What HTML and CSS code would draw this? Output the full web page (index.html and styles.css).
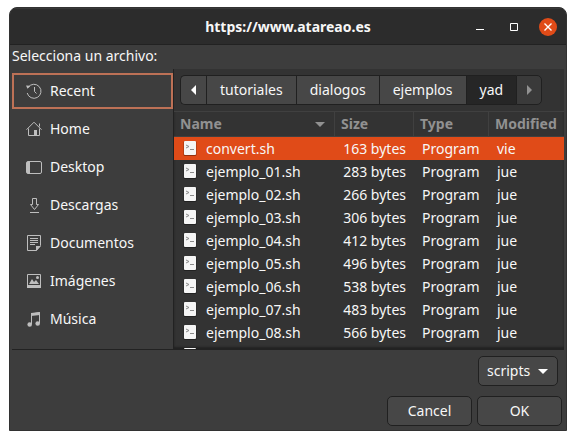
FILE: index.html
```html
<!DOCTYPE html>
<html lang="es">
<head>
<meta charset="utf-8">
<meta name="viewport" content="width=device-width, initial-scale=1">
<title>https://www.atareao.es</title>
<link rel="stylesheet" href="styles.css">
</head>
<body>
<svg class="defs" aria-hidden="true">
  <symbol id="script" viewBox="0 0 14 16">
    <rect x="0.5" y="1" width="13" height="15" rx="1.5" fill="#000" fill-opacity=".35"/>
    <rect x="1" y="1" width="12" height="14" rx="1" fill="#f5f5f5"/>
    <path d="M3 5l3 1.5L3 8M7 9.5h4" fill="none" stroke="#8a8a8a"/>
  </symbol>
</svg>
<main class="window">
  <header class="titlebar">
    <h1>https://www.atareao.es</h1>
    <div class="controls">
      <button type="button" aria-label="Minimizar"><svg width="18" height="18"><path d="M5 11.5h8" stroke="#fff"/></svg></button>
      <button type="button" aria-label="Maximizar"><svg width="18" height="18"><path d="M5.5 5.5h7v7h-7z" fill="none" stroke="#fff"/></svg></button>
      <button type="button" class="close" aria-label="Cerrar"><svg width="18" height="18"><path d="M5.5 5.5l7 7M12.5 5.5l-7 7" stroke="#fff" stroke-width="1.4"/></svg></button>
    </div>
  </header>
  <p class="prompt">Selecciona un archivo:</p>
  <div class="chooser">
    <nav class="places">
      <a href="#" class="current"><svg width="16" height="16"><path d="M2.3 4.2A7 7 0 1 1 1.2 10M8.500 4v4.500l2 2" /><path d="M0 2.500l4.500.3-3 3z" fill="#bebebe" stroke="none"/></svg>Recent</a>
      <a href="#"><svg width="16" height="16"><path d="M.5 8.700L8 1.200l7.500 7.500M2.500 7.500v7h11v-7M13.500 5.500v-3"/><path d="M8 9h3v6H8z" fill="#bebebe" stroke="none"/></svg>Home</a>
      <a href="#"><svg width="16" height="16"><rect x=".5" y="2.500" width="15" height="12" rx="1.500"/><path d="M1 3h3v11H1z" fill="#bebebe" stroke="none"/></svg>Desktop</a>
      <a href="#"><svg width="16" height="16"><path d="M6.500 1.500h4v6h2l-4 5-4-5h2zM4 15.500h9"/></svg>Descargas</a>
      <a href="#"><svg width="16" height="16"><path d="M1.500.5h13v10l-4 5h-9zM4 3.500h8M4 5.500h8M4 7.500h8M4 9.500h5"/><path d="M10 11h5l-5 5z" fill="#bebebe" stroke="none"/></svg>Documentos</a>
      <a href="#"><svg width="16" height="16"><path d="M1.500 1.500h13v13h-13z"/><path d="M1 12h14v3H1zM3 11l3-5 2 3 2-2 3 4z" fill="#bebebe" stroke="none"/><circle cx="11.500" cy="4.500" r="1.500" fill="#bebebe" stroke="none"/></svg>Imágenes</a>
      <a href="#"><svg width="16" height="16"><path d="M5.500 13V3l8-1.500V12" /><path d="M5 2l9-1v3L5 5z" fill="#bebebe" stroke="none"/><circle cx="3.700" cy="13.500" r="2.300" fill="#bebebe" stroke="none"/><circle cx="11.700" cy="12.500" r="2.300" fill="#bebebe" stroke="none"/></svg>Música</a>
    </nav>
    <section class="browser">
      <div class="path">
        <button type="button" class="arrow" aria-label="Anterior"><svg width="6" height="10"><path d="M5 0v10L0 5z" fill="#fff"/></svg></button>
        <button type="button">tutoriales</button>
        <button type="button">dialogos</button>
        <button type="button">ejemplos</button>
        <button type="button" class="active">yad</button>
        <button type="button" class="arrow off" aria-label="Siguiente" disabled><svg width="6" height="10"><path d="M1 0v10l5-5z" fill="#919191"/></svg></button>
      </div>
      <div class="files">
        <table>
          <colgroup><col><col class="c-size"><col class="c-type"><col class="c-mod"></colgroup>
          <thead><tr><th><div class="sort">Name<svg width="10" height="5"><path d="M0 0h10L5 5z" fill="#919191"/></svg></div></th><th>Size</th><th>Type</th><th>Modified</th></tr></thead>
          <tbody>
            <tr class="selected"><td><svg class="doc"><use href="#script"/></svg>convert.sh</td><td>163 bytes</td><td>Program</td><td>vie</td></tr>
            <tr><td><svg class="doc"><use href="#script"/></svg>ejemplo_01.sh</td><td>283 bytes</td><td>Program</td><td>jue</td></tr>
            <tr><td><svg class="doc"><use href="#script"/></svg>ejemplo_02.sh</td><td>266 bytes</td><td>Program</td><td>jue</td></tr>
            <tr><td><svg class="doc"><use href="#script"/></svg>ejemplo_03.sh</td><td>306 bytes</td><td>Program</td><td>jue</td></tr>
            <tr><td><svg class="doc"><use href="#script"/></svg>ejemplo_04.sh</td><td>412 bytes</td><td>Program</td><td>jue</td></tr>
            <tr><td><svg class="doc"><use href="#script"/></svg>ejemplo_05.sh</td><td>496 bytes</td><td>Program</td><td>jue</td></tr>
            <tr><td><svg class="doc"><use href="#script"/></svg>ejemplo_06.sh</td><td>538 bytes</td><td>Program</td><td>jue</td></tr>
            <tr><td><svg class="doc"><use href="#script"/></svg>ejemplo_07.sh</td><td>483 bytes</td><td>Program</td><td>jue</td></tr>
            <tr><td><svg class="doc"><use href="#script"/></svg>ejemplo_08.sh</td><td>566 bytes</td><td>Program</td><td>jue</td></tr>
            <tr><td><svg class="doc"><use href="#script"/></svg></td><td></td><td></td><td></td></tr>
          </tbody>
        </table>
      </div>
    </section>
  </div>
  <div class="filter">
    <select aria-label="Filtro"><option>scripts</option></select>
    <svg width="10" height="5" aria-hidden="true"><path d="M0 0h10L5 5z" fill="#fff"/></svg>
  </div>
  <footer class="actions">
    <button type="button">Cancel</button>
    <button type="button">OK</button>
  </footer>
</main>
</body>
</html>
```
FILE: styles.css
```css
* { box-sizing: border-box; }

body {
  margin: 0;
  padding: 7px 9px 9px;
  background: #fff;
  color: #f7f7f7;
  font: 14px/20px "Noto Sans", "Open Sans", sans-serif;
}

button, select { font: inherit; color: inherit; margin: 0; }
.defs { position: absolute; width: 0; height: 0; }

.window {
  display: flex;
  flex-direction: column;
  height: calc(100vh - 16px);
  background: #3d3d3d;
  border: 1px solid #323232;
  border-radius: 8px 8px 0 0;
  overflow: hidden;
}

.titlebar {
  display: grid;
  grid-template-columns: 1fr auto 1fr;
  align-items: center;
  flex: none;
  height: 37px;
  padding: 0 9px;
  background: #2c2c2c;
  border-top: 1px solid #383838;
  border-bottom: 1px solid #222;
}
.titlebar h1 {
  grid-column: 2;
  margin: 0;
  font-size: 14px;
  font-weight: 700;
}
.controls {
  display: flex;
  justify-content: flex-end;
  gap: 16px;
}
.controls button {
  width: 18px;
  height: 18px;
  padding: 0;
  border: 0;
  border-radius: 50%;
  background: none;
}
.controls svg { display: block; }
.controls .close { background: #e04b18; }

.prompt { flex: none; margin: 0; padding: 1px 2px 3px; }

.chooser {
  display: flex;
  flex: 1;
  min-height: 0;
  margin: 0 2px;
  border-bottom: 1px solid #222;
}

.places {
  display: flex;
  flex-direction: column;
  gap: 2px;
  flex: 0 0 161px;
  padding-top: 4px;
}
.places a {
  display: flex;
  align-items: center;
  gap: 8px;
  height: 36px;
  padding-left: 12px;
  border: 2px solid transparent;
  color: inherit;
  text-decoration: none;
}
.places .current { border-color: #bd7156; }
.places svg { fill: none; stroke: #bebebe; overflow: visible; }

.browser {
  display: flex;
  flex-direction: column;
  flex: 1;
  min-width: 0;
  border-left: 1px solid #222;
  background: #333;
}

.path { display: flex; flex: none; padding: 6px; }
.path button {
  height: 30px;
  padding: 0 13px;
  border: 1px solid #202020;
  border-right-width: 0;
  background: #474747;
}
.path button:first-child { border-radius: 5px 0 0 5px; }
.path button:last-child { border-radius: 0 5px 5px 0; border-right-width: 1px; }
.path .arrow { width: 26px; padding: 0; }
.path .arrow svg { display: block; margin: auto; }
.path .active { background: #262626; }
.path .off { background: #3a3a3a; }

.files { flex: 1; min-height: 0; overflow: hidden; box-shadow: inset 0 -2px 2px #222; }
table { width: 100%; table-layout: fixed; border-collapse: separate; border-spacing: 0; }
.c-size { width: 79px; }
.c-type { width: 75px; }
.c-mod { width: 75px; }
th {
  height: 26px;
  padding: 0 6px;
  border-top: 1px solid #404040;
  border-bottom: 1px solid #404040;
  border-right: 1px solid #404040;
  color: #919191;
  font-weight: 700;
  text-align: left;
  white-space: nowrap;
}
th:last-child { border-right: 0; }
.sort { display: flex; align-items: center; justify-content: space-between; padding-right: 3px; }
td { height: 23px; padding: 0 8px; white-space: nowrap; }
td:first-child { padding-left: 9px; }
td:nth-child(2) { text-align: right; }
.selected td { background: #e04b18; }
.doc { width: 14px; height: 16px; margin-right: 9px; vertical-align: -2px; }

.filter {
  display: flex;
  align-items: center;
  align-self: flex-end;
  flex: none;
  margin: 6px 8px 10px;
}
.filter svg { margin-left: -20px; margin-right: 10px; pointer-events: none; }
.filter select { width: 80px; padding: 0 8px; appearance: none; }
.filter select, .actions button {
  height: 30px;
  border: 1px solid #202020;
  border-radius: 5px;
  background: #474747;
}

.actions { display: flex; justify-content: flex-end; gap: 5px; flex: none; padding: 0 4px 4px; }
.actions button { width: 85px; }
```
